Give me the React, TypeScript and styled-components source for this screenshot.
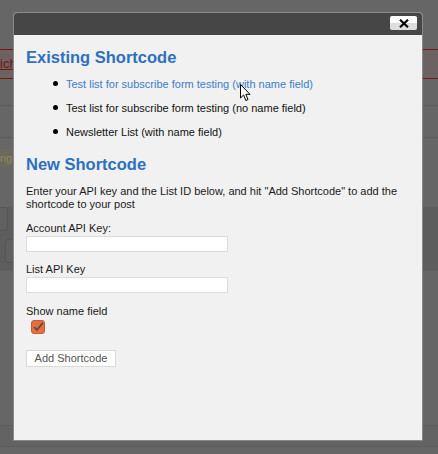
import React from 'react';
import styled, { createGlobalStyle } from 'styled-components';

const GlobalStyle = createGlobalStyle`
  html, body {
    margin: 0;
    padding: 0;
    background: #666;
    font-family: "Liberation Sans", Arial, sans-serif;
  }
`;

const Screen = styled.div`
  position: relative;
  width: 438px;
  height: 454px;
  overflow: hidden;
  background: #666;
`;

/* dimmed admin page behind the overlay */
const Page = styled.div`
  display: flex;
  flex-direction: column;
  width: 438px;
  height: 454px;
`;

const Gap = styled.div<{ $h: number; $line?: boolean; $bg?: string }>`
  height: ${p => p.$h}px;
  flex: none;
  background: ${p => p.$bg || 'transparent'};
  border-bottom: ${p => (p.$line ? '1px solid #5c5c5c' : 'none')};
`;

const Notice = styled.div`
  height: 28px;
  flex: none;
  background: #6d6262;
  border-top: 1px solid #7a1616;
  border-bottom: 1px solid #7a1616;
  color: #741414;
  font-size: 13px;
  line-height: 28px;
  text-decoration: underline;
`;

const Faded = styled.div`
  height: 18px;
  flex: none;
  width: 40px;
  background: #6a695c;
  color: #8e8a5e;
  font-size: 11px;
  line-height: 18px;
`;

const ToolBand = styled.div`
  height: 64px;
  flex: none;
  background: #5d5d5d;
  display: flex;
  flex-direction: column;
  gap: 8px;
`;

const Ghost = styled.div<{ $x: number }>`
  margin-left: ${p => p.$x}px;
  width: 10px;
  height: 22px;
  border: 1px solid #555;
  border-radius: 3px;
  background: #606060;
`;

const Modal = styled.div`
  position: absolute;
  left: 13px;
  top: 12px;
  width: 408px;
  height: 427px;
  border: 1px solid #8a8a8a;
  border-radius: 4px 4px 0 0;
  background: #f1f1f1;
  display: flex;
  flex-direction: column;
  overflow: hidden;
`;

const TitleBar = styled.div`
  height: 22px;
  flex: none;
  background: #464646;
  display: flex;
  justify-content: flex-end;
  align-items: flex-start;
  padding: 3px 5px 0 0;
  box-sizing: border-box;
`;

const CloseButton = styled.button`
  width: 27px;
  height: 14px;
  padding: 0;
  border: none;
  border-radius: 2px;
  background: linear-gradient(#ffffff 0%, #ffffff 50%, #dedfdc 50%, #dedfdc 100%);
  display: flex;
  align-items: center;
  justify-content: center;
`;

const Body = styled.div`
  padding: 12px 12px 0 12px;
  display: flex;
  flex-direction: column;
  align-items: flex-start;
  color: #1a1a1a;
  font-size: 11px;
`;

const Heading = styled.h2<{ $top: number }>`
  margin: ${p => p.$top}px 0 0 0;
  font-size: 16.5px;
  line-height: 19px;
  font-weight: bold;
  color: #2d70bd;
`;

const List = styled.ul`
  margin: 11px 0 0 0;
  padding: 0 0 0 27px;
  list-style: none;
`;

const Item = styled.li`
  display: flex;
  align-items: flex-start;
  gap: 8px;
  line-height: 13px;
  margin-bottom: 11px;
  color: #111;
  &::before {
    content: '';
    flex: none;
    width: 5px;
    height: 5px;
    margin-top: 3px;
    border-radius: 50%;
    background: #000;
  }
  &:last-child {
    margin-bottom: 0;
  }
`;

const ListLink = styled.a`
  color: #3a7dc8;
  text-decoration: none;
`;

const Text = styled.p<{ $top: number }>`
  margin: ${p => p.$top}px 0 0 0;
  line-height: 13px;
  color: #1a1a1a;
`;

const Field = styled.input`
  margin-top: 1px;
  width: 202px;
  height: 16px;
  box-sizing: border-box;
  border: 1px solid #dcdcdc;
  background: #fff;
  padding: 0 3px;
  font: inherit;
`;

const Check = styled.span`
  margin: 2px 0 0 5px;
  display: block;
  width: 14px;
  height: 14px;
`;

const SubmitButton = styled.button`
  margin-top: 16px;
  width: 90px;
  height: 17px;
  padding: 0;
  border: 1px solid #dadada;
  background: #fff;
  color: #555;
  font-family: "Liberation Sans", Arial, sans-serif;
  font-size: 11px;
  line-height: 15px;
`;

const Pointer = styled.svg`
  position: absolute;
  left: 240px;
  top: 84px;
`;

export default function App() {
  return (
    <>
      <GlobalStyle />
      <Screen>
        <Page>
          <Gap $h={49} />
          <Notice>ich</Notice>
          <Gap $h={26} $line />
          <Gap $h={31} $line />
          <Gap $h={11} />
          <Faded>ng</Faded>
          <Gap $h={40} />
          <ToolBand>
            <Ghost $x={-4} />
            <Ghost $x={5} />
          </ToolBand>
          <Gap $h={154} $line />
          <Gap $h={20} $line $bg="#636363" />
        </Page>

        <Modal>
          <TitleBar>
            <CloseButton aria-label="Close">
              <svg width="10" height="9" viewBox="0 0 10 9">
                <path d="M1 0.8 L9 8.2 M9 0.8 L1 8.2" stroke="#000" strokeWidth="2.2" />
              </svg>
            </CloseButton>
          </TitleBar>
          <Body>
            <Heading $top={1}>Existing Shortcode</Heading>
            <List>
              <Item>
                <ListLink href="#">Test list for subscribe form testing (with name field)</ListLink>
              </Item>
              <Item>Test list for subscribe form testing (no name field)</Item>
              <Item>Newsletter List (with name field)</Item>
            </List>

            <Heading $top={16}>New Shortcode</Heading>
            <Text $top={11}>
              Enter your API key and the List ID below, and hit "Add Shortcode" to add the
              <br />
              shortcode to your post
            </Text>

            <Text $top={11}>Account API Key:</Text>
            <Field type="text" />

            <Text $top={11}>List API Key</Text>
            <Field type="text" />

            <Text $top={12}>Show name field</Text>
            <Check>
              <svg width="14" height="14" viewBox="0 0 14 14">
                <rect x="0.5" y="0.5" width="13" height="13" rx="2.5" fill="#e4703f" stroke="#c45a34" />
                <path d="M3.2 7 L6 10 L11.8 2.8" fill="none" stroke="#5e463e" strokeWidth="1.8" />
              </svg>
            </Check>

            <SubmitButton>Add Shortcode</SubmitButton>
          </Body>
        </Modal>

        <Pointer width="12" height="18" viewBox="0 0 12 18">
          <path
            d="M0.5 0.5 L0.5 14 L3.6 11 L5.8 16.5 L8 15.6 L5.8 10.3 L10 10.3 Z"
            fill="#fff"
            stroke="#000"
            strokeWidth="1"
            strokeLinejoin="round"
          />
        </Pointer>
      </Screen>
    </>
  );
}
